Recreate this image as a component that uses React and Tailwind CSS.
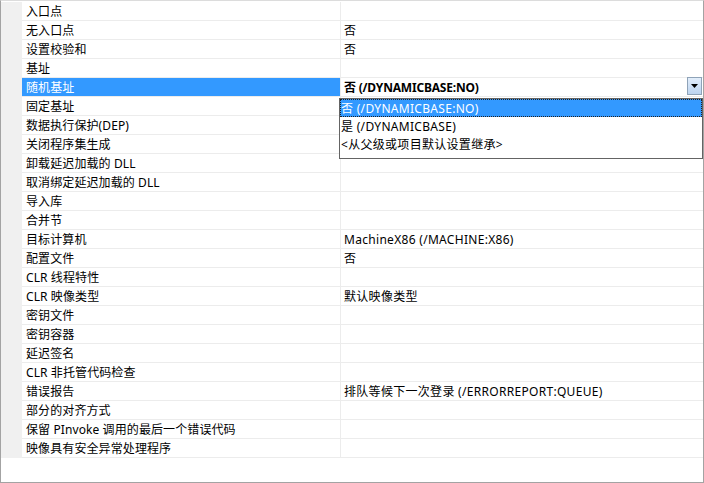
import React from "react";

const rows = [
  { name: "入口点", value: "" },
  { name: "无入口点", value: "否" },
  { name: "设置校验和", value: "否" },
  { name: "基址", value: "" },
  { name: "随机基址", value: "否 (/DYNAMICBASE:NO)", selected: true },
  { name: "固定基址", value: "" },
  { name: "数据执行保护(DEP)", value: "" },
  { name: "关闭程序集生成", value: "" },
  { name: "卸载延迟加载的 DLL", value: "" },
  { name: "取消绑定延迟加载的 DLL", value: "" },
  { name: "导入库", value: "" },
  { name: "合并节", value: "" },
  { name: "目标计算机", value: "MachineX86 (/MACHINE:X86)" },
  { name: "配置文件", value: "否" },
  { name: "CLR 线程特性", value: "" },
  { name: "CLR 映像类型", value: "默认映像类型" },
  { name: "密钥文件", value: "" },
  { name: "密钥容器", value: "" },
  { name: "延迟签名", value: "" },
  { name: "CLR 非托管代码检查", value: "" },
  { name: "错误报告", value: "排队等候下一次登录 (/ERRORREPORT:QUEUE)" },
  { name: "部分的对齐方式", value: "" },
  { name: "保留 PInvoke 调用的最后一个错误代码", value: "" },
  { name: "映像具有安全异常处理程序", value: "" },
];

const options = ["否 (/DYNAMICBASE:NO)", "是 (/DYNAMICBASE)", "<从父级或项目默认设置继承>"];

const Row = ({ row }) => (
  <div className="flex h-[19px] border-b border-[#ececec]">
    <div
      className={`w-[318px] pl-[4px] pt-[2px] leading-[16px] tracking-[0.1px] whitespace-nowrap ${
        row.selected ? "bg-[#3399ff] text-white" : "text-black"
      }`}
    >
      {row.name}
    </div>
    <div className="relative flex-1 border-l border-[#ececec] pl-[3px] pt-[2px] leading-[16px] tracking-[0.3px] whitespace-nowrap">
      {row.selected ? (
        <>
          <span className="font-bold tracking-[-0.2px]">{row.value}</span>
          {/* dropdown button */}
          <div className="absolute right-[1px] top-[-1px] flex h-[18px] w-[15px] items-center justify-center border border-[#8fa3b8] bg-gradient-to-b from-[#e3eefb] to-[#bcd4f0]">
            <svg width="7" height="4" viewBox="0 0 7 4">
              <path d="M0 0h7L3.5 4z" fill="#000" />
            </svg>
          </div>
        </>
      ) : (
        row.value
      )}
    </div>
  </div>
);

export default function App() {
  return (
    <div
      className="relative h-[483px] w-[704px] border border-[#a3a3a3] border-t-[#dcdcdc] bg-white pt-[1px] text-[12px] text-black"
      style={{ fontFamily: '"Noto Sans", "Noto Sans CJK SC", sans-serif' }}
    >
      <div className="flex">
        {/* left gutter */}
        <div className="w-[21px] shrink-0 bg-[#f0f0f0]" />
        <div className="flex-1">
          {rows.map((row) => (
            <Row key={row.name} row={row} />
          ))}
        </div>
      </div>

      {/* open dropdown list */}
      <div className="absolute left-[338px] top-[97px] w-[364px] border border-[#646464] bg-white pb-[5px] tracking-[0.3px]">
        {options.map((opt, i) => (
          <div
            key={opt}
            className={`h-[18px] pl-[1px] pt-[2px] leading-[16px] whitespace-nowrap ${
              i === 0 ? "bg-[#3399ff] text-white outline-1 outline-dotted outline-[#222] -outline-offset-1" : ""
            }`}
          >
            {opt}
          </div>
        ))}
      </div>
    </div>
  );
}
